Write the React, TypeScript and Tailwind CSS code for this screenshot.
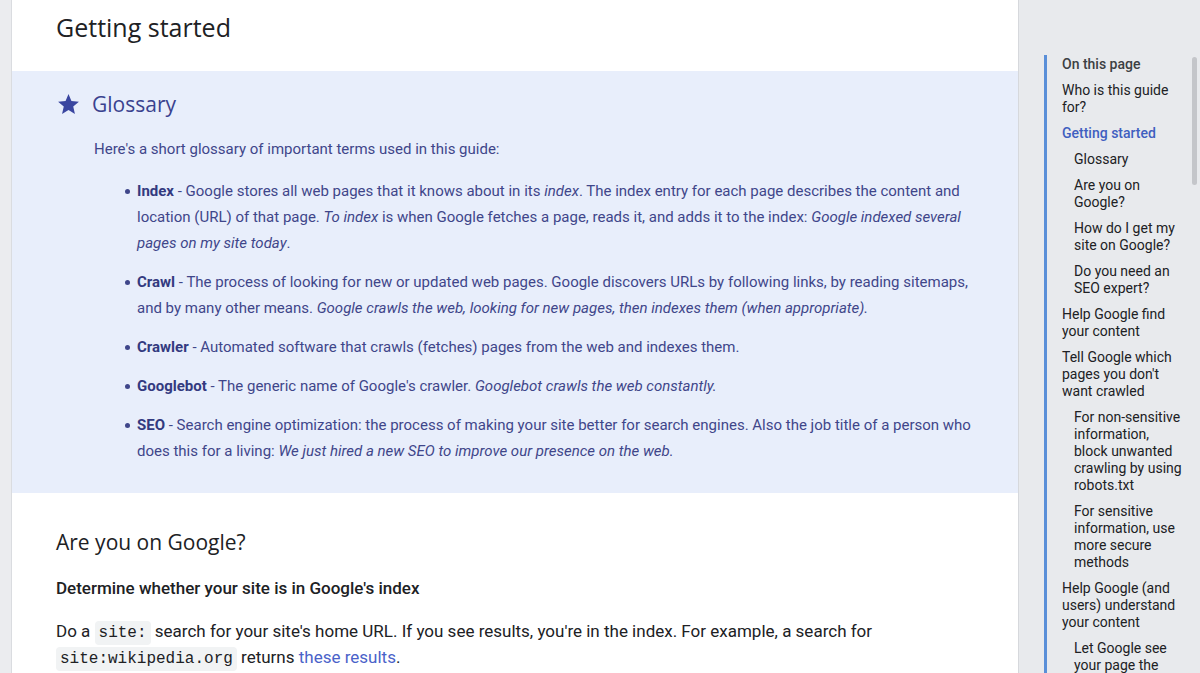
import React from 'react';

const toc: { label: string; level: number; active?: boolean }[] = [
  { label: 'Who is this guide for?', level: 0 },
  { label: 'Getting started', level: 0, active: true },
  { label: 'Glossary', level: 1 },
  { label: 'Are you on Google?', level: 1 },
  { label: 'How do I get my site on Google?', level: 1 },
  { label: 'Do you need an SEO expert?', level: 1 },
  { label: 'Help Google find your content', level: 0 },
  { label: "Tell Google which pages you don't want crawled", level: 0 },
  { label: 'For non-sensitive information, block unwanted crawling by using robots.txt', level: 1 },
  { label: 'For sensitive information, use more secure methods', level: 1 },
  { label: 'Help Google (and users) understand your content', level: 0 },
  { label: 'Let Google see your page the same way a user does', level: 1 },
];

function Star() {
  return (
    <svg width="25" height="25" viewBox="0 0 24 24" className="fill-[#3a46a0] -ml-[2px]">
      <path d="M12 17.27L18.18 21l-1.64-7.03L22 9.24l-7.19-.61L12 2 9.19 8.63 2 9.24l5.46 4.73L5.82 21z" />
    </svg>
  );
}

function Term({ name, children }: { name: string; children: React.ReactNode }) {
  return (
    <li className="flex">
      <span className="w-[12px] shrink-0 flex items-start pt-[11px]">
        <span className="w-[5px] h-[5px] rounded-full bg-[#3f468a]" />
      </span>
      <p>
        <b className="font-bold text-[#333a80]">{name}</b> - {children}
      </p>
    </li>
  );
}

function Code({ children }: { children: React.ReactNode }) {
  return (
    <code
      className="bg-[#f1f3f4] px-[4px] py-[3px] text-[16px] leading-none rounded-sm"
      style={{ fontFamily: '"Liberation Mono", monospace' }}
    >
      {children}
    </code>
  );
}

export default function App() {
  return (
    <div className="flex h-[673px] w-[1200px] overflow-hidden" style={{ fontFamily: 'Roboto, "Liberation Sans", sans-serif' }}>
      <div className="w-[12px] shrink-0 bg-[#ebecef] border-r border-[#dadce0]" />

      <main className="flex-1 bg-white text-[#202124]">
        <h1 className="pl-[44px] pt-[9px] h-[71px] text-[25px] leading-[36px] text-[#202124]" style={{ fontFamily: '"Open Sans", "Noto Sans", sans-serif' }}>
          Getting started
        </h1>

        <section className="bg-[#e8eefb] pl-[46px] pr-[33px] pt-[17px] pb-[29px] text-[#3f468a] text-[15px] leading-[26px]">
          <div className="flex items-center h-[32px]">
            <Star />
            <h2 className="ml-[11px] text-[21px] text-[#3a428f]" style={{ fontFamily: '"Open Sans", "Noto Sans", sans-serif' }}>
              Glossary
            </h2>
          </div>
          <p className="mt-[16px] pl-[36px]">Here's a short glossary of important terms used in this guide:</p>
          <ul className="mt-[16px] pl-[67px] flex flex-col gap-[13px]">
            <Term name="Index">
              Google stores all web pages that it knows about in its <i>index</i>. The index entry for each page describes the content
              and location (URL) of that page. <i>To index</i> is when Google fetches a page, reads it, and adds it to the index:{' '}
              <i>Google indexed several pages on my site today</i>.
            </Term>
            <Term name="Crawl">
              The process of looking for new or updated web pages. Google discovers URLs by following links, by reading sitemaps, and
              by many other means. <i>Google crawls the web, looking for new pages, then indexes them (when appropriate).</i>
            </Term>
            <Term name="Crawler">Automated software that crawls (fetches) pages from the web and indexes them.</Term>
            <Term name="Googlebot">
              The generic name of Google's crawler. <i>Googlebot crawls the web constantly.</i>
            </Term>
            <Term name="SEO">
              Search engine optimization: the process of making your site better for search engines. Also the job title of a person
              who does this for a living: <i>We just hired a new SEO to improve our presence on the web.</i>
            </Term>
          </ul>
        </section>

        <section className="pl-[44px] pr-[100px]">
          <h2 className="mt-[33px] text-[21px] leading-[32px]" style={{ fontFamily: '"Open Sans", "Noto Sans", sans-serif' }}>
            Are you on Google?
          </h2>
          <h3 className="mt-[17px] text-[17px] leading-[26px] font-medium">Determine whether your site is in Google's index</h3>
          <p className="mt-[17px] text-[17px] leading-[26px]">
            Do a <Code>site:</Code> search for your site's home URL. If you see results, you're in the index. For example, a search
            for <Code>site:wikipedia.org</Code> returns <a className="text-[#4a62c9]">these results</a>.
          </p>
        </section>
      </main>

      <aside className="relative w-[182px] shrink-0 bg-[#e8eaed] border-l border-[#d6d8dc] pl-[25px] pr-[16px] pt-[55px]">
        <div className="border-l-[3px] border-[#5a8fd8] pl-[15px] h-full text-[14px] leading-[17px] text-[#202124]">
          <div className="font-medium text-[#3c4043] pt-[1px]">On this page</div>
          <ul className="mt-[9px] flex flex-col gap-[9px]">
            {toc.map((t) => (
              <li key={t.label} className={`${t.level === 1 ? 'pl-[12px]' : ''} ${t.active ? 'text-[#3f5fc0] font-medium' : ''}`}>
                {t.label}
              </li>
            ))}
          </ul>
        </div>
        <div className="absolute right-[3px] top-[57px] w-[5px] h-[128px] rounded-full bg-[#c4c6ca]" />
      </aside>
    </div>
  );
}
